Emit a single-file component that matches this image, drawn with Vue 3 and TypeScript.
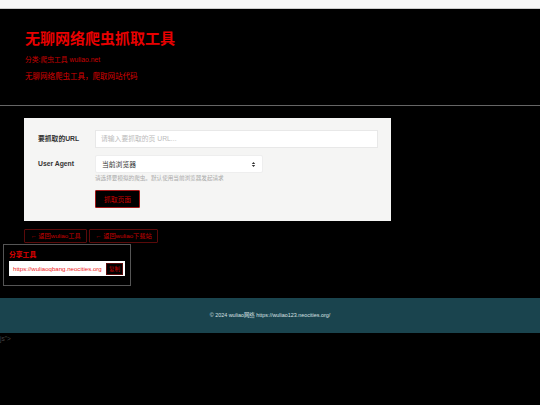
<script setup lang="ts">
const shareUrl = 'https://wuliaoqbang.neocities.org'
</script>

<template>
  <div class="page">
    <div class="topbar"></div>
    <header class="head">
      <h1>无聊网络爬虫抓取工具</h1>
      <p class="cat">分类:爬虫工具 wuliao.net</p>
      <p class="desc">无聊网络爬虫工具，爬取网站代码</p>
    </header>
    <main class="main">
      <section class="card">
        <div class="row">
          <label class="lab">要抓取的URL</label>
          <div class="fake-input"><span class="ph">请输入要抓取的页 URL...</span></div>
        </div>
        <div class="row agent">
          <label class="lab">User Agent</label>
          <div class="agent-col">
            <div class="fake-select">
              <span>当前浏览器</span>
              <svg width="5" height="7" viewBox="0 0 5 7"><path d="M2.5 1 L4.2 3 H0.8 Z M2.5 6 L4.2 4 H0.8 Z" fill="#333" /></svg>
            </div>
            <div class="hint">请选择要模拟的爬虫。默认使用当前浏览器发起请求</div>
          </div>
        </div>
        <div class="submit-row"><button class="submit">抓取页面</button></div>
      </section>
      <nav class="links">
        <a class="back">← 返回wuliao工具</a>
        <a class="back">← 返回wuliao下载站</a>
      </nav>
    </main>
    <aside class="share">
      <div class="share-title">分享工具</div>
      <div class="share-box">
        <span class="url">{{ shareUrl }}</span>
        <button class="copy">复制</button>
      </div>
    </aside>
    <footer class="foot">© 2024 wuliao网络 https://wuliao123.neocities.org/</footer>
    <div class="stray">js"&gt;</div>
  </div>
</template>

<style scoped>
.page {
  width: 540px;
  height: 405px;
  overflow: hidden;
  background: #000;
  color: #f00;
  font-family: "Liberation Sans", "Noto Sans CJK SC", sans-serif;
}
.topbar {
  height: 8px;
  background: #f8f8f8;
  border-bottom: 1px solid #ccc;
}
.head {
  height: 97px;
  box-sizing: border-box;
  padding: 21px 25px 0;
  border-bottom: 1px solid #666;
}
h1 {
  margin: 0;
  font-size: 15px;
  line-height: 18px;
  font-weight: 700;
  color: #e80000;
}
.cat {
  margin: 7px 0 0;
  font-size: 6.8px;
  line-height: 10px;
  color: #c80000;
}
.desc {
  margin: 7px 0 0;
  font-size: 7.5px;
  line-height: 10px;
  color: #d80000;
}
.main {
  padding: 12px 0 0 24px;
}
.card {
  width: 367px;
  height: 103px;
  box-sizing: border-box;
  background: #f5f5f4;
  padding: 12px 13px 0 14px;
}
.row {
  display: flex;
}
.lab {
  width: 57px;
  flex: none;
  font-size: 6.8px;
  font-weight: 700;
  line-height: 18px;
  color: #333;
}
.fake-input {
  flex: 1;
  height: 18px;
  box-sizing: border-box;
  background: #fff;
  border: 1px solid #e8e8e8;
  padding-left: 5px;
  font-size: 6.8px;
  line-height: 16px;
}
.ph {
  color: #bbb;
}
.agent {
  margin-top: 7px;
}
.agent .lab {
  line-height: 17px;
}
.fake-select {
  width: 168px;
  height: 18px;
  box-sizing: border-box;
  background: #fff;
  border: 1px solid #eee;
  border-radius: 2px;
  padding: 0 6px;
  display: flex;
  align-items: center;
  justify-content: space-between;
  font-size: 6.8px;
  color: #333;
}
.hint {
  margin-top: 1px;
  font-size: 5.6px;
  line-height: 8px;
  color: #aaa;
}
.submit-row {
  margin: 8px 0 0 57px;
}
.submit {
  display: block;
  width: 45px;
  height: 18px;
  padding: 0;
  background: #000;
  color: #c80000;
  border: 1px solid #a01818;
  border-radius: 1px;
  font-family: inherit;
  font-size: 6.8px;
}
.links {
  display: flex;
  gap: 2px;
  margin-top: 8px;
}
.back {
  height: 14px;
  box-sizing: border-box;
  border: 1px solid #5a0a0a;
  border-radius: 1px;
  font-size: 6.2px;
  line-height: 12px;
  text-align: center;
  white-space: nowrap;
  color: #c80000;
}
.back:first-child {
  width: 63px;
}
.back:last-child {
  width: 69px;
}
.share {
  width: 128px;
  height: 42px;
  box-sizing: border-box;
  margin: 1px 0 0 3px;
  border: 1px solid #555;
  padding: 5px 5px 0;
}
.share-title {
  font-size: 6.8px;
  font-weight: 700;
  line-height: 10px;
  color: #e00000;
}
.share-box {
  margin-top: 1px;
  height: 15px;
  background: #fff;
  display: flex;
  align-items: center;
  padding: 0 2px 0 4px;
}
.url {
  flex: 1;
  white-space: nowrap;
  font-size: 6.1px;
  color: #f02020;
}
.copy {
  flex: none;
  width: 17px;
  height: 12px;
  padding: 0;
  background: #000;
  color: #c00000;
  border: 1px solid #5a0a0a;
  font-family: inherit;
  font-size: 5.6px;
  line-height: 10px;
}
.foot {
  margin-top: 12px;
  height: 35px;
  background: #1a444e;
  color: #d8e0e2;
  font-size: 5.4px;
  line-height: 35px;
  text-align: center;
}
.stray {
  padding-top: 1px;
  font-size: 6.5px;
  line-height: 9px;
  color: #444;
}
</style>
